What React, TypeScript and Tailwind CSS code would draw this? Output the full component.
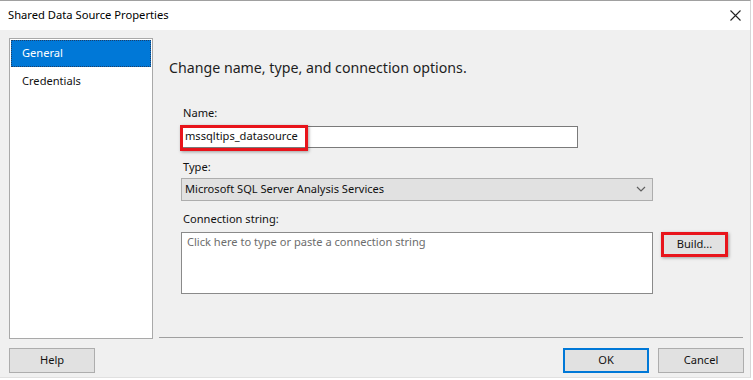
const font = { fontFamily: '"Noto Sans", "Segoe UI", sans-serif' };

function Chevron() {
  return (
    <svg width="10" height="6" viewBox="0 0 10 6" className="mr-[6px]">
      <path d="M1 1 L5 5 L9 1" fill="none" stroke="#606060" strokeWidth="1.2" />
    </svg>
  );
}

function CloseIcon() {
  return (
    <svg width="11" height="11" viewBox="0 0 11 11">
      <path d="M0.5 0.5 L10.5 10.5 M10.5 0.5 L0.5 10.5" stroke="#222" strokeWidth="1.1" />
    </svg>
  );
}

export default function App() {
  return (
    <div className="h-[380px] w-[753px] bg-white text-[11.1px] text-[#111]" style={font}>
      <div className="flex h-[378px] w-[751px] flex-col border-t border-r border-b border-[#a0a0a0] border-r-[#d6d6d6] border-b-[#e0e0e0] bg-[#f0f0f0]">
        {/* title bar */}
        <div className="flex h-[29px] items-center justify-between bg-white pl-[8px] pr-[9px]">
          <span className="text-[11.2px] text-black">Shared Data Source Properties</span>
          <CloseIcon />
        </div>

        <div className="flex flex-1">
          {/* page list */}
          <div className="ml-[9px] mt-[8px] h-[301px] w-[144px] border border-[#a9a9a9] bg-white p-px">
            <div className="flex h-[27px] items-center border border-dotted border-[#1c3f6a] bg-[#0078d7] pl-[10px] text-white">
              General
            </div>
            <div className="flex h-[30px] items-center pl-[11px]">Credentials</div>
          </div>

          {/* right side */}
          <div className="ml-[6px] flex flex-1 flex-col">
            <div className="flex-1 pl-[10px]">
              <div className="mt-[27px] text-[14.2px] leading-[22px] text-[#1e1e1e]">
                Change name, type, and connection options.
              </div>

              <div className="ml-[12px] mt-[26px] flex flex-col">
                <div className="ml-[2px] leading-[16px]">Name:</div>
                <div className="relative mt-[5px] flex h-[22px] w-[397px] items-center border border-[#7a7a7a] bg-white pl-[3px]">
                  mssqltips_datasource
                  <div className="absolute -left-[2px] -top-[2px] h-[26px] w-[128px] border-[3px] border-[#e8141b] shadow-[1px_1px_3px_rgba(0,0,0,0.35)]" />
                </div>

                <div className="ml-[2px] mt-[11px] leading-[16px]">Type:</div>
                <div className="mt-[3px] flex h-[23px] w-[472px] items-center justify-between border border-[#adadad] bg-[#e1e1e1] pl-[3px]">
                  <span>Microsoft SQL Server Analysis Services</span>
                  <Chevron />
                </div>

                <div className="ml-[2px] mt-[10px] leading-[16px]">Connection string:</div>
                <div className="mt-[5px] flex items-start">
                  <div className="h-[62px] w-[472px] border border-[#8a8a8a] bg-white pl-[5px] pt-[1px] text-[#6d6d6d]">
                    Click here to type or paste a connection string
                  </div>
                  <button className="ml-[8px] flex h-[25px] w-[67px] items-center justify-center border-[3px] border-[#e8141b] bg-[#e1e1e1] shadow-[1px_1px_3px_rgba(0,0,0,0.35)]">
                    Build...
                  </button>
                </div>
              </div>
            </div>
            <div className="mb-[1px] mr-[7px] h-px bg-[#a0a0a0]" />
          </div>
        </div>

        {/* button row */}
        <div className="flex h-[39px] items-start pt-[9px] pl-[9px] pr-[6px]">
          <button className="flex h-[25px] w-[86px] items-center justify-center border border-[#adadad] bg-[#e1e1e1]">
            Help
          </button>
          <div className="flex-1" />
          <button className="flex h-[25px] w-[86px] items-center justify-center border-2 border-[#0078d7] bg-[#e1e1e1]">
            OK
          </button>
          <button className="ml-[9px] flex h-[25px] w-[86px] items-center justify-center border border-[#adadad] bg-[#e1e1e1]">
            Cancel
          </button>
        </div>
      </div>
    </div>
  );
}
